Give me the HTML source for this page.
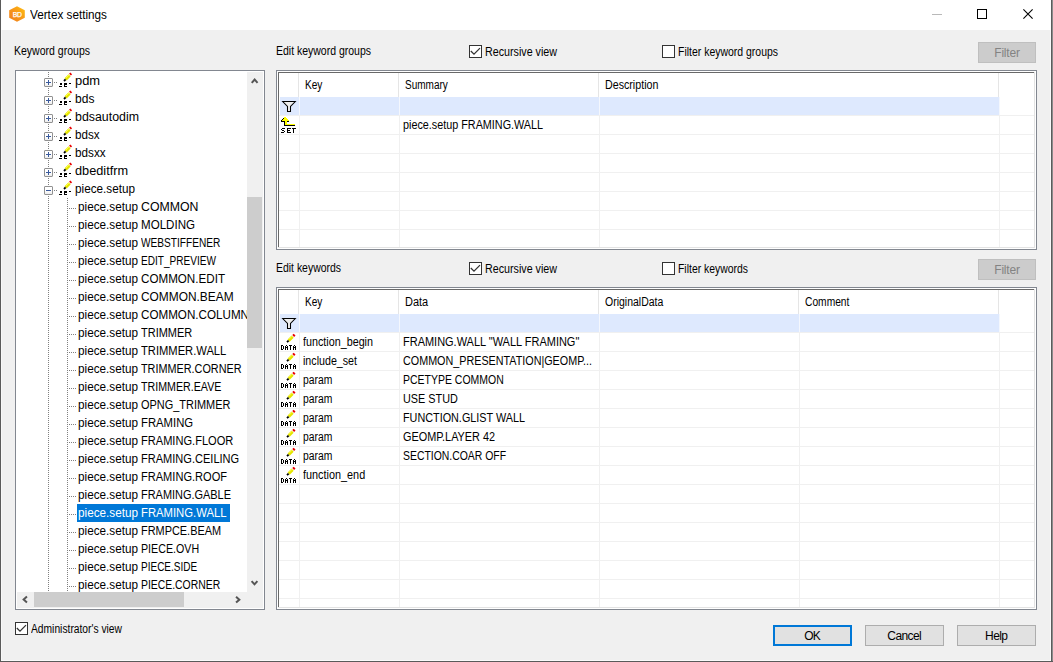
<!DOCTYPE html><html><head><meta charset="utf-8"><style>
*{margin:0;padding:0;box-sizing:border-box}
html,body{width:1053px;height:662px;overflow:hidden;background:#f0f0f0;font-family:"Liberation Sans",sans-serif;color:#000}
.a{position:absolute}
.t{position:absolute;white-space:pre;font-size:12px;line-height:13px}
.g{position:absolute;white-space:pre;font-size:12px;line-height:13px}
.btn{position:absolute;border:1px solid #adadad;background:#e1e1e1;font-size:12px;text-align:center;line-height:20px;letter-spacing:-0.6px;text-indent:-0.6px}
.chk{position:absolute;width:13px;height:13px;border:1px solid #333;background:#fff}
.ti{position:absolute;white-space:pre;font-size:12px;line-height:18px;height:18px}
.r{position:absolute}
</style></head><body>
<div class="r" style="left:0px;top:0px;width:1051px;height:30px;background:#fff;"></div>
<div class="r" style="left:0px;top:0px;width:1px;height:662px;background:#5a5a5a;"></div>
<div class="r" style="left:1051px;top:0px;width:1px;height:662px;background:#5c5c5c;"></div>
<div class="r" style="left:1052px;top:0px;width:1px;height:662px;background:#8c8c8c;"></div>
<div class="r" style="left:0px;top:661px;width:1053px;height:1px;background:#5a5a5a;"></div>
<div class="r" style="left:1050px;top:30px;width:1px;height:631px;background:#fafafa;"></div>
<div class="r" style="left:1px;top:660px;width:1050px;height:1px;background:#fafafa;"></div>
<div class="r" style="left:1px;top:30px;width:1px;height:630px;background:#f8f8f8;"></div>
<svg class="a" style="left:9px;top:6px" width="16" height="16" viewBox="0 0 16 16">
<defs><linearGradient id="og" x1="0" y1="1" x2="1" y2="0"><stop offset="0" stop-color="#f07f1a"/><stop offset="0.5" stop-color="#f7961a"/><stop offset="1" stop-color="#ffc20e"/></linearGradient></defs>
<polygon points="8,0.2 15.8,4.3 15.8,11.7 8,15.8 0.2,11.7 0.2,4.3" fill="url(#og)"/>
<text x="8.3" y="11.3" font-size="6.8" font-family="Liberation Sans" fill="#fff" text-anchor="middle" letter-spacing="-0.2" stroke="#fff" stroke-width="0.25">BD</text>
</svg>
<div class="t" style="left:30px;top:8px;font-size:12px;line-height:14px;transform:scaleX(0.9782);transform-origin:0 0;">Vertex settings</div>
<div class="r" style="left:932px;top:14px;width:10px;height:1px;background:#b9b9b9;"></div>
<div class="r" style="left:977px;top:9px;width:10px;height:10px;border:1px solid #000"></div>
<svg class="a" style="left:1022px;top:8px" width="12" height="12" viewBox="0 0 12 12"><path d="M1.4 1.4L10.6 10.6M10.6 1.4L1.4 10.6" stroke="#000" stroke-width="1.1"/></svg>
<div class="t" style="left:14px;top:45px;;transform:scaleX(0.8764);transform-origin:0 0;">Keyword groups</div>
<div class="r" style="left:15px;top:70px;width:250px;height:540px;border:1px solid #828790;background:#fff"></div>
<div class="r" style="left:16px;top:71px;width:247px;height:537px;overflow:hidden">
<div class="r" style="left:32px;top:1px;width:1px;height:539px;background:repeating-linear-gradient(to bottom,#808080 0 1px,transparent 1px 2px)"></div>
<div class="r" style="left:51px;top:127px;width:1px;height:413px;background:repeating-linear-gradient(to bottom,#808080 0 1px,transparent 1px 2px)"></div>
<div class="r" style="left:28px;top:7px;width:9px;height:9px;background:linear-gradient(#fff,#fff 50%,#ececec);border:1px solid #919191;border-radius:1px;"></div>
<div class="r" style="left:30px;top:11px;width:5px;height:1px;background:#3a5a9c;"></div>
<div class="r" style="left:32px;top:9px;width:1px;height:5px;background:#3a5a9c;"></div>
<div class="r" style="left:38px;top:11px;width:4px;height:1px;background:repeating-linear-gradient(to right,#808080 0 1px,transparent 1px 2px)"></div>
<svg class="r" style="left:42px;top:1px" width="16" height="16" viewBox="0 0 16 16">
<path d="M7.6 7.4L11.6 3.4" stroke="#e4e400" stroke-width="3"/>
<path d="M8 6L11 3" stroke="#ffff40" stroke-width="1"/>
<path d="M6 9L7.6 7.4" stroke="#000" stroke-width="1.8"/>
<path d="M12 2.6L13.2 1.4" stroke="#e80000" stroke-width="2.6"/>
<g fill="#000" shape-rendering="crispEdges">
<rect x="2" y="11" width="2" height="2"/><rect x="1" y="14" width="3" height="1"/>
<rect x="6" y="11" width="3" height="2"/><rect x="6" y="13" width="1" height="1"/><rect x="6" y="14" width="3" height="1"/>
<rect x="11" y="11" width="2" height="1"/>
</g></svg>
<div class="ti" style="left:59px;top:1px;;transform:scaleX(1.0752);transform-origin:0 0;">pdm</div>
<div class="r" style="left:28px;top:25px;width:9px;height:9px;background:linear-gradient(#fff,#fff 50%,#ececec);border:1px solid #919191;border-radius:1px;"></div>
<div class="r" style="left:30px;top:29px;width:5px;height:1px;background:#3a5a9c;"></div>
<div class="r" style="left:32px;top:27px;width:1px;height:5px;background:#3a5a9c;"></div>
<div class="r" style="left:38px;top:29px;width:4px;height:1px;background:repeating-linear-gradient(to right,#808080 0 1px,transparent 1px 2px)"></div>
<svg class="r" style="left:42px;top:19px" width="16" height="16" viewBox="0 0 16 16">
<path d="M7.6 7.4L11.6 3.4" stroke="#e4e400" stroke-width="3"/>
<path d="M8 6L11 3" stroke="#ffff40" stroke-width="1"/>
<path d="M6 9L7.6 7.4" stroke="#000" stroke-width="1.8"/>
<path d="M12 2.6L13.2 1.4" stroke="#e80000" stroke-width="2.6"/>
<g fill="#000" shape-rendering="crispEdges">
<rect x="2" y="11" width="2" height="2"/><rect x="1" y="14" width="3" height="1"/>
<rect x="6" y="11" width="3" height="2"/><rect x="6" y="13" width="1" height="1"/><rect x="6" y="14" width="3" height="1"/>
<rect x="11" y="11" width="2" height="1"/>
</g></svg>
<div class="ti" style="left:59px;top:19px;;transform:scaleX(1.0021);transform-origin:0 0;">bds</div>
<div class="r" style="left:28px;top:43px;width:9px;height:9px;background:linear-gradient(#fff,#fff 50%,#ececec);border:1px solid #919191;border-radius:1px;"></div>
<div class="r" style="left:30px;top:47px;width:5px;height:1px;background:#3a5a9c;"></div>
<div class="r" style="left:32px;top:45px;width:1px;height:5px;background:#3a5a9c;"></div>
<div class="r" style="left:38px;top:47px;width:4px;height:1px;background:repeating-linear-gradient(to right,#808080 0 1px,transparent 1px 2px)"></div>
<svg class="r" style="left:42px;top:37px" width="16" height="16" viewBox="0 0 16 16">
<path d="M7.6 7.4L11.6 3.4" stroke="#e4e400" stroke-width="3"/>
<path d="M8 6L11 3" stroke="#ffff40" stroke-width="1"/>
<path d="M6 9L7.6 7.4" stroke="#000" stroke-width="1.8"/>
<path d="M12 2.6L13.2 1.4" stroke="#e80000" stroke-width="2.6"/>
<g fill="#000" shape-rendering="crispEdges">
<rect x="2" y="11" width="2" height="2"/><rect x="1" y="14" width="3" height="1"/>
<rect x="6" y="11" width="3" height="2"/><rect x="6" y="13" width="1" height="1"/><rect x="6" y="14" width="3" height="1"/>
<rect x="11" y="11" width="2" height="1"/>
</g></svg>
<div class="ti" style="left:59px;top:37px;;transform:scaleX(1.0315);transform-origin:0 0;">bdsautodim</div>
<div class="r" style="left:28px;top:61px;width:9px;height:9px;background:linear-gradient(#fff,#fff 50%,#ececec);border:1px solid #919191;border-radius:1px;"></div>
<div class="r" style="left:30px;top:65px;width:5px;height:1px;background:#3a5a9c;"></div>
<div class="r" style="left:32px;top:63px;width:1px;height:5px;background:#3a5a9c;"></div>
<div class="r" style="left:38px;top:65px;width:4px;height:1px;background:repeating-linear-gradient(to right,#808080 0 1px,transparent 1px 2px)"></div>
<svg class="r" style="left:42px;top:55px" width="16" height="16" viewBox="0 0 16 16">
<path d="M7.6 7.4L11.6 3.4" stroke="#e4e400" stroke-width="3"/>
<path d="M8 6L11 3" stroke="#ffff40" stroke-width="1"/>
<path d="M6 9L7.6 7.4" stroke="#000" stroke-width="1.8"/>
<path d="M12 2.6L13.2 1.4" stroke="#e80000" stroke-width="2.6"/>
<g fill="#000" shape-rendering="crispEdges">
<rect x="2" y="11" width="2" height="2"/><rect x="1" y="14" width="3" height="1"/>
<rect x="6" y="11" width="3" height="2"/><rect x="6" y="13" width="1" height="1"/><rect x="6" y="14" width="3" height="1"/>
<rect x="11" y="11" width="2" height="1"/>
</g></svg>
<div class="ti" style="left:59px;top:55px;;transform:scaleX(0.9701);transform-origin:0 0;">bdsx</div>
<div class="r" style="left:28px;top:79px;width:9px;height:9px;background:linear-gradient(#fff,#fff 50%,#ececec);border:1px solid #919191;border-radius:1px;"></div>
<div class="r" style="left:30px;top:83px;width:5px;height:1px;background:#3a5a9c;"></div>
<div class="r" style="left:32px;top:81px;width:1px;height:5px;background:#3a5a9c;"></div>
<div class="r" style="left:38px;top:83px;width:4px;height:1px;background:repeating-linear-gradient(to right,#808080 0 1px,transparent 1px 2px)"></div>
<svg class="r" style="left:42px;top:73px" width="16" height="16" viewBox="0 0 16 16">
<path d="M7.6 7.4L11.6 3.4" stroke="#e4e400" stroke-width="3"/>
<path d="M8 6L11 3" stroke="#ffff40" stroke-width="1"/>
<path d="M6 9L7.6 7.4" stroke="#000" stroke-width="1.8"/>
<path d="M12 2.6L13.2 1.4" stroke="#e80000" stroke-width="2.6"/>
<g fill="#000" shape-rendering="crispEdges">
<rect x="2" y="11" width="2" height="2"/><rect x="1" y="14" width="3" height="1"/>
<rect x="6" y="11" width="3" height="2"/><rect x="6" y="13" width="1" height="1"/><rect x="6" y="14" width="3" height="1"/>
<rect x="11" y="11" width="2" height="1"/>
</g></svg>
<div class="ti" style="left:59px;top:73px;;transform:scaleX(0.9758);transform-origin:0 0;">bdsxx</div>
<div class="r" style="left:28px;top:97px;width:9px;height:9px;background:linear-gradient(#fff,#fff 50%,#ececec);border:1px solid #919191;border-radius:1px;"></div>
<div class="r" style="left:30px;top:101px;width:5px;height:1px;background:#3a5a9c;"></div>
<div class="r" style="left:32px;top:99px;width:1px;height:5px;background:#3a5a9c;"></div>
<div class="r" style="left:38px;top:101px;width:4px;height:1px;background:repeating-linear-gradient(to right,#808080 0 1px,transparent 1px 2px)"></div>
<svg class="r" style="left:42px;top:91px" width="16" height="16" viewBox="0 0 16 16">
<path d="M7.6 7.4L11.6 3.4" stroke="#e4e400" stroke-width="3"/>
<path d="M8 6L11 3" stroke="#ffff40" stroke-width="1"/>
<path d="M6 9L7.6 7.4" stroke="#000" stroke-width="1.8"/>
<path d="M12 2.6L13.2 1.4" stroke="#e80000" stroke-width="2.6"/>
<g fill="#000" shape-rendering="crispEdges">
<rect x="2" y="11" width="2" height="2"/><rect x="1" y="14" width="3" height="1"/>
<rect x="6" y="11" width="3" height="2"/><rect x="6" y="13" width="1" height="1"/><rect x="6" y="14" width="3" height="1"/>
<rect x="11" y="11" width="2" height="1"/>
</g></svg>
<div class="ti" style="left:59px;top:91px;;transform:scaleX(1.0613);transform-origin:0 0;">dbeditfrm</div>
<div class="r" style="left:28px;top:115px;width:9px;height:9px;background:linear-gradient(#fff,#fff 50%,#ececec);border:1px solid #919191;border-radius:1px;"></div>
<div class="r" style="left:30px;top:119px;width:5px;height:1px;background:#3a5a9c;"></div>
<div class="r" style="left:38px;top:119px;width:4px;height:1px;background:repeating-linear-gradient(to right,#808080 0 1px,transparent 1px 2px)"></div>
<svg class="r" style="left:42px;top:109px" width="16" height="16" viewBox="0 0 16 16">
<path d="M7.6 7.4L11.6 3.4" stroke="#e4e400" stroke-width="3"/>
<path d="M8 6L11 3" stroke="#ffff40" stroke-width="1"/>
<path d="M6 9L7.6 7.4" stroke="#000" stroke-width="1.8"/>
<path d="M12 2.6L13.2 1.4" stroke="#e80000" stroke-width="2.6"/>
<g fill="#000" shape-rendering="crispEdges">
<rect x="2" y="11" width="2" height="2"/><rect x="1" y="14" width="3" height="1"/>
<rect x="6" y="11" width="3" height="2"/><rect x="6" y="13" width="1" height="1"/><rect x="6" y="14" width="3" height="1"/>
<rect x="11" y="11" width="2" height="1"/>
</g></svg>
<div class="ti" style="left:59px;top:109px;;transform:scaleX(0.9773);transform-origin:0 0;">piece.setup</div>
<div class="r" style="left:53px;top:137px;width:8px;height:1px;background:repeating-linear-gradient(to right,#808080 0 1px,transparent 1px 2px)"></div>
<div class="ti" style="left:62px;top:127px;;transform:scaleX(0.9773);transform-origin:0 0;">piece.setup</div>
<div class="ti" style="left:125px;top:127px;;transform:scaleX(1.0250);transform-origin:0 0;">COMMON</div>
<div class="r" style="left:53px;top:155px;width:8px;height:1px;background:repeating-linear-gradient(to right,#808080 0 1px,transparent 1px 2px)"></div>
<div class="ti" style="left:62px;top:145px;;transform:scaleX(0.9773);transform-origin:0 0;">piece.setup</div>
<div class="ti" style="left:125px;top:145px;;transform:scaleX(0.9640);transform-origin:0 0;">MOLDING</div>
<div class="r" style="left:53px;top:173px;width:8px;height:1px;background:repeating-linear-gradient(to right,#808080 0 1px,transparent 1px 2px)"></div>
<div class="ti" style="left:62px;top:163px;;transform:scaleX(0.9773);transform-origin:0 0;">piece.setup</div>
<div class="ti" style="left:125px;top:163px;;transform:scaleX(0.8445);transform-origin:0 0;">WEBSTIFFENER</div>
<div class="r" style="left:53px;top:191px;width:8px;height:1px;background:repeating-linear-gradient(to right,#808080 0 1px,transparent 1px 2px)"></div>
<div class="ti" style="left:62px;top:181px;;transform:scaleX(0.9773);transform-origin:0 0;">piece.setup</div>
<div class="ti" style="left:125px;top:181px;;transform:scaleX(0.8382);transform-origin:0 0;">EDIT_PREVIEW</div>
<div class="r" style="left:53px;top:209px;width:8px;height:1px;background:repeating-linear-gradient(to right,#808080 0 1px,transparent 1px 2px)"></div>
<div class="ti" style="left:62px;top:199px;;transform:scaleX(0.9773);transform-origin:0 0;">piece.setup</div>
<div class="ti" style="left:125px;top:199px;;transform:scaleX(0.9692);transform-origin:0 0;">COMMON.EDIT</div>
<div class="r" style="left:53px;top:227px;width:8px;height:1px;background:repeating-linear-gradient(to right,#808080 0 1px,transparent 1px 2px)"></div>
<div class="ti" style="left:62px;top:217px;;transform:scaleX(0.9773);transform-origin:0 0;">piece.setup</div>
<div class="ti" style="left:125px;top:217px;;transform:scaleX(0.9920);transform-origin:0 0;">COMMON.BEAM</div>
<div class="r" style="left:53px;top:245px;width:8px;height:1px;background:repeating-linear-gradient(to right,#808080 0 1px,transparent 1px 2px)"></div>
<div class="ti" style="left:62px;top:235px;;transform:scaleX(0.9773);transform-origin:0 0;">piece.setup</div>
<div class="ti" style="left:125px;top:235px;;transform:scaleX(0.9701);transform-origin:0 0;">COMMON.COLUMN</div>
<div class="r" style="left:53px;top:263px;width:8px;height:1px;background:repeating-linear-gradient(to right,#808080 0 1px,transparent 1px 2px)"></div>
<div class="ti" style="left:62px;top:253px;;transform:scaleX(0.9773);transform-origin:0 0;">piece.setup</div>
<div class="ti" style="left:125px;top:253px;;transform:scaleX(0.9161);transform-origin:0 0;">TRIMMER</div>
<div class="r" style="left:53px;top:281px;width:8px;height:1px;background:repeating-linear-gradient(to right,#808080 0 1px,transparent 1px 2px)"></div>
<div class="ti" style="left:62px;top:271px;;transform:scaleX(0.9773);transform-origin:0 0;">piece.setup</div>
<div class="ti" style="left:125px;top:271px;;transform:scaleX(0.9316);transform-origin:0 0;">TRIMMER.WALL</div>
<div class="r" style="left:53px;top:299px;width:8px;height:1px;background:repeating-linear-gradient(to right,#808080 0 1px,transparent 1px 2px)"></div>
<div class="ti" style="left:62px;top:289px;;transform:scaleX(0.9773);transform-origin:0 0;">piece.setup</div>
<div class="ti" style="left:125px;top:289px;;transform:scaleX(0.9036);transform-origin:0 0;">TRIMMER.CORNER</div>
<div class="r" style="left:53px;top:317px;width:8px;height:1px;background:repeating-linear-gradient(to right,#808080 0 1px,transparent 1px 2px)"></div>
<div class="ti" style="left:62px;top:307px;;transform:scaleX(0.9773);transform-origin:0 0;">piece.setup</div>
<div class="ti" style="left:125px;top:307px;;transform:scaleX(0.8889);transform-origin:0 0;">TRIMMER.EAVE</div>
<div class="r" style="left:53px;top:335px;width:8px;height:1px;background:repeating-linear-gradient(to right,#808080 0 1px,transparent 1px 2px)"></div>
<div class="ti" style="left:62px;top:325px;;transform:scaleX(0.9773);transform-origin:0 0;">piece.setup</div>
<div class="ti" style="left:125px;top:325px;;transform:scaleX(0.9121);transform-origin:0 0;">OPNG_TRIMMER</div>
<div class="r" style="left:53px;top:353px;width:8px;height:1px;background:repeating-linear-gradient(to right,#808080 0 1px,transparent 1px 2px)"></div>
<div class="ti" style="left:62px;top:343px;;transform:scaleX(0.9773);transform-origin:0 0;">piece.setup</div>
<div class="ti" style="left:125px;top:343px;;transform:scaleX(0.9414);transform-origin:0 0;">FRAMING</div>
<div class="r" style="left:53px;top:371px;width:8px;height:1px;background:repeating-linear-gradient(to right,#808080 0 1px,transparent 1px 2px)"></div>
<div class="ti" style="left:62px;top:361px;;transform:scaleX(0.9773);transform-origin:0 0;">piece.setup</div>
<div class="ti" style="left:125px;top:361px;;transform:scaleX(0.9229);transform-origin:0 0;">FRAMING.FLOOR</div>
<div class="r" style="left:53px;top:389px;width:8px;height:1px;background:repeating-linear-gradient(to right,#808080 0 1px,transparent 1px 2px)"></div>
<div class="ti" style="left:62px;top:379px;;transform:scaleX(0.9773);transform-origin:0 0;">piece.setup</div>
<div class="ti" style="left:125px;top:379px;;transform:scaleX(0.9204);transform-origin:0 0;">FRAMING.CEILING</div>
<div class="r" style="left:53px;top:407px;width:8px;height:1px;background:repeating-linear-gradient(to right,#808080 0 1px,transparent 1px 2px)"></div>
<div class="ti" style="left:62px;top:397px;;transform:scaleX(0.9773);transform-origin:0 0;">piece.setup</div>
<div class="ti" style="left:125px;top:397px;;transform:scaleX(0.9215);transform-origin:0 0;">FRAMING.ROOF</div>
<div class="r" style="left:53px;top:425px;width:8px;height:1px;background:repeating-linear-gradient(to right,#808080 0 1px,transparent 1px 2px)"></div>
<div class="ti" style="left:62px;top:415px;;transform:scaleX(0.9773);transform-origin:0 0;">piece.setup</div>
<div class="ti" style="left:125px;top:415px;;transform:scaleX(0.9120);transform-origin:0 0;">FRAMING.GABLE</div>
<div class="r" style="left:53px;top:443px;width:8px;height:1px;background:repeating-linear-gradient(to right,#808080 0 1px,transparent 1px 2px)"></div>
<div class="r" style="left:61px;top:433px;width:153px;height:18px;background:#0078d7;"></div>
<div class="ti" style="left:62px;top:433px;color:#fff;transform:scaleX(0.9773);transform-origin:0 0;">piece.setup</div>
<div class="ti" style="left:125px;top:433px;color:#fff;transform:scaleX(0.9405);transform-origin:0 0;">FRAMING.WALL</div>
<div class="r" style="left:53px;top:461px;width:8px;height:1px;background:repeating-linear-gradient(to right,#808080 0 1px,transparent 1px 2px)"></div>
<div class="ti" style="left:62px;top:451px;;transform:scaleX(0.9773);transform-origin:0 0;">piece.setup</div>
<div class="ti" style="left:125px;top:451px;;transform:scaleX(0.9101);transform-origin:0 0;">FRMPCE.BEAM</div>
<div class="r" style="left:53px;top:479px;width:8px;height:1px;background:repeating-linear-gradient(to right,#808080 0 1px,transparent 1px 2px)"></div>
<div class="ti" style="left:62px;top:469px;;transform:scaleX(0.9773);transform-origin:0 0;">piece.setup</div>
<div class="ti" style="left:125px;top:469px;;transform:scaleX(0.8889);transform-origin:0 0;">PIECE.OVH</div>
<div class="r" style="left:53px;top:497px;width:8px;height:1px;background:repeating-linear-gradient(to right,#808080 0 1px,transparent 1px 2px)"></div>
<div class="ti" style="left:62px;top:487px;;transform:scaleX(0.9773);transform-origin:0 0;">piece.setup</div>
<div class="ti" style="left:125px;top:487px;;transform:scaleX(0.8343);transform-origin:0 0;">PIECE.SIDE</div>
<div class="r" style="left:53px;top:515px;width:8px;height:1px;background:repeating-linear-gradient(to right,#808080 0 1px,transparent 1px 2px)"></div>
<div class="ti" style="left:62px;top:505px;;transform:scaleX(0.9773);transform-origin:0 0;">piece.setup</div>
<div class="ti" style="left:125px;top:505px;;transform:scaleX(0.8669);transform-origin:0 0;">PIECE.CORNER</div>
<div class="r" style="left:231px;top:1px;width:16px;height:520px;background:#f0f0f0;"></div>
<div class="r" style="left:231px;top:126px;width:15px;height:151px;background:#cdcdcd;"></div>
<div class="r" style="left:1px;top:521px;width:230px;height:16px;background:#f0f0f0;"></div>
<div class="r" style="left:18px;top:521px;width:150px;height:15px;background:#cdcdcd;"></div>
<div class="r" style="left:231px;top:521px;width:16px;height:16px;background:#f0f0f0;"></div>
</div>
<svg class="a" style="left:249px;top:75px" width="13" height="13" viewBox="0 0 13 13"><path d="M2.7500000000000058 7.850000000000006L5.650000000000006 4.550000000000005L8.550000000000006 7.850000000000006" fill="none" stroke="#555" stroke-width="2"/></svg>
<svg class="a" style="left:248px;top:578px" width="14" height="12" viewBox="0 0 14 12"><path d="M3.6 3.0500000000000003L6.5 6.3500000000000005L9.4 3.0500000000000003" fill="none" stroke="#555" stroke-width="2"/></svg>
<svg class="a" style="left:19px;top:593px" width="13" height="14" viewBox="0 0 13 14"><path d="M7.95 3.6L4.6499999999999995 6.5L7.95 9.4" fill="none" stroke="#555" stroke-width="2"/></svg>
<svg class="a" style="left:232px;top:594px" width="13" height="13" viewBox="0 0 13 13"><path d="M4.05 2.7499999999999774L7.3500000000000005 5.649999999999977L4.05 8.549999999999978" fill="none" stroke="#555" stroke-width="2"/></svg>
<div class="t" style="left:276px;top:45px;;transform:scaleX(0.8737);transform-origin:0 0;">Edit keyword groups</div>
<div class="chk" style="left:469px;top:45px"></div>
<svg class="a" style="left:469px;top:45px" width="13" height="13" viewBox="0 0 13 13"><path d="M1.8 6L5 9.2L11 3.1" fill="none" stroke="#333" stroke-width="1.3"/></svg>
<div class="t" style="left:485px;top:46px;;transform:scaleX(0.8922);transform-origin:0 0;">Recursive view</div>
<div class="chk" style="left:662px;top:45px"></div>
<div class="t" style="left:678px;top:46px;;transform:scaleX(0.8717);transform-origin:0 0;">Filter keyword groups</div>
<div class="btn" style="left:978px;top:42px;width:58px;height:21px;background:#cccccc;border-color:#bfbfbf;color:#838383;letter-spacing:-0.2px;text-indent:0">Filter</div>
<div class="r" style="left:276px;top:70px;width:761px;height:180px;border:1px solid #828790;background:#fff"></div>
<div class="r" style="left:278px;top:72px;width:757px;height:1px;background:#696969;"></div>
<div class="r" style="left:278px;top:72px;width:1px;height:175px;background:#696969;"></div>
<div class="r" style="left:278px;top:247px;width:757px;height:1px;background:#e3e3e3;"></div>
<div class="r" style="left:1034px;top:72px;width:1px;height:176px;background:#e3e3e3;"></div>
<div class="r" style="left:298px;top:73px;width:1px;height:24px;background:#e5e5e5;"></div>
<div class="r" style="left:398px;top:73px;width:1px;height:24px;background:#e5e5e5;"></div>
<div class="r" style="left:598px;top:73px;width:1px;height:24px;background:#e5e5e5;"></div>
<div class="r" style="left:998px;top:73px;width:1px;height:24px;background:#e5e5e5;"></div>
<div class="g" style="left:305px;top:79px;;transform:scaleX(0.8411);transform-origin:0 0;">Key</div>
<div class="g" style="left:405px;top:79px;;transform:scaleX(0.8336);transform-origin:0 0;">Summary</div>
<div class="g" style="left:605px;top:79px;;transform:scaleX(0.8895);transform-origin:0 0;">Description</div>
<div class="r" style="left:280px;top:97px;width:719px;height:18px;background:#dee9fe;"></div>
<div class="r" style="left:279px;top:115px;width:755px;height:1px;background:#f0f0f0;"></div>
<div class="r" style="left:279px;top:134px;width:755px;height:1px;background:#f0f0f0;"></div>
<div class="r" style="left:279px;top:153px;width:755px;height:1px;background:#f0f0f0;"></div>
<div class="r" style="left:279px;top:172px;width:755px;height:1px;background:#f0f0f0;"></div>
<div class="r" style="left:279px;top:191px;width:755px;height:1px;background:#f0f0f0;"></div>
<div class="r" style="left:279px;top:210px;width:755px;height:1px;background:#f0f0f0;"></div>
<div class="r" style="left:279px;top:229px;width:755px;height:1px;background:#f0f0f0;"></div>
<div class="r" style="left:299px;top:115px;width:1px;height:132px;background:#f0f0f0;"></div>
<div class="r" style="left:299px;top:97px;width:1px;height:18px;background:#f4f7fd;"></div>
<div class="r" style="left:399px;top:115px;width:1px;height:132px;background:#f0f0f0;"></div>
<div class="r" style="left:399px;top:97px;width:1px;height:18px;background:#f4f7fd;"></div>
<div class="r" style="left:599px;top:115px;width:1px;height:132px;background:#f0f0f0;"></div>
<div class="r" style="left:599px;top:97px;width:1px;height:18px;background:#f4f7fd;"></div>
<div class="r" style="left:999px;top:115px;width:1px;height:132px;background:#f0f0f0;"></div>
<div class="r" style="left:999px;top:97px;width:1px;height:18px;background:#f4f7fd;"></div>
<svg class="a" style="left:279px;top:97px" width="20" height="18" viewBox="0 0 20 18"><path d="M3.7 4.5H16.3L11.5 9.5V14.5H8.5V9.5Z" fill="#eeeeee" stroke="#000" stroke-width="1.05"/></svg>
<svg class="a" style="left:279px;top:114px" width="20" height="20" viewBox="0 17 20 20" shape-rendering="crispEdges"><rect x="5" y="20" width="2" height="1" fill="#ffff00"/><rect x="4" y="21" width="1" height="1" fill="#000"/><rect x="5" y="21" width="3" height="1" fill="#ffff00"/><rect x="3" y="22" width="1" height="1" fill="#000"/><rect x="4" y="22" width="5" height="1" fill="#ffff00"/><rect x="2" y="23" width="1" height="1" fill="#000"/><rect x="3" y="23" width="7" height="1" fill="#ffff00"/><rect x="2" y="24" width="4" height="1" fill="#000"/><rect x="6" y="24" width="2" height="1" fill="#ffff00"/><rect x="8" y="24" width="2" height="1" fill="#000"/><rect x="5" y="25" width="1" height="3" fill="#000"/><rect x="6" y="25" width="2" height="2" fill="#ffff00"/><rect x="6" y="27" width="10" height="1" fill="#ffff00"/><rect x="5" y="28" width="11" height="1" fill="#000"/><rect x="3" y="31" width="3" height="1" fill="#000"/><rect x="2" y="32" width="1" height="1" fill="#000"/><rect x="3" y="33" width="2" height="1" fill="#000"/><rect x="5" y="34" width="1" height="1" fill="#000"/><rect x="2" y="35" width="3" height="1" fill="#000"/><rect x="8" y="31" width="4" height="1" fill="#000"/><rect x="8" y="32" width="1" height="3" fill="#000"/><rect x="9" y="33" width="2" height="1" fill="#000"/><rect x="8" y="35" width="4" height="1" fill="#000"/><rect x="13" y="31" width="4" height="1" fill="#000"/><rect x="14" y="32" width="1" height="4" fill="#000"/></svg>
<div class="g" style="left:403px;top:119px;;transform:scaleX(0.9003);transform-origin:0 0;">piece.setup FRAMING.WALL</div>
<div class="t" style="left:276px;top:262px;;transform:scaleX(0.8701);transform-origin:0 0;">Edit keywords</div>
<div class="chk" style="left:469px;top:262px"></div>
<svg class="a" style="left:469px;top:262px" width="13" height="13" viewBox="0 0 13 13"><path d="M1.8 6L5 9.2L11 3.1" fill="none" stroke="#333" stroke-width="1.3"/></svg>
<div class="t" style="left:485px;top:263px;;transform:scaleX(0.8922);transform-origin:0 0;">Recursive view</div>
<div class="chk" style="left:662px;top:262px"></div>
<div class="t" style="left:678px;top:263px;;transform:scaleX(0.8675);transform-origin:0 0;">Filter keywords</div>
<div class="btn" style="left:978px;top:259px;width:58px;height:21px;background:#cccccc;border-color:#bfbfbf;color:#838383;letter-spacing:-0.2px;text-indent:0">Filter</div>
<div class="r" style="left:276px;top:287px;width:761px;height:323px;border:1px solid #828790;background:#fff"></div>
<div class="r" style="left:278px;top:289px;width:757px;height:1px;background:#696969;"></div>
<div class="r" style="left:278px;top:289px;width:1px;height:318px;background:#696969;"></div>
<div class="r" style="left:278px;top:607px;width:757px;height:1px;background:#e3e3e3;"></div>
<div class="r" style="left:1034px;top:289px;width:1px;height:319px;background:#e3e3e3;"></div>
<div class="r" style="left:298px;top:290px;width:1px;height:24px;background:#e5e5e5;"></div>
<div class="r" style="left:398px;top:290px;width:1px;height:24px;background:#e5e5e5;"></div>
<div class="r" style="left:598px;top:290px;width:1px;height:24px;background:#e5e5e5;"></div>
<div class="r" style="left:798px;top:290px;width:1px;height:24px;background:#e5e5e5;"></div>
<div class="r" style="left:998px;top:290px;width:1px;height:24px;background:#e5e5e5;"></div>
<div class="g" style="left:305px;top:296px;;transform:scaleX(0.8411);transform-origin:0 0;">Key</div>
<div class="g" style="left:405px;top:296px;;transform:scaleX(0.9148);transform-origin:0 0;">Data</div>
<div class="g" style="left:605px;top:296px;;transform:scaleX(0.8740);transform-origin:0 0;">OriginalData</div>
<div class="g" style="left:805px;top:296px;;transform:scaleX(0.8536);transform-origin:0 0;">Comment</div>
<div class="r" style="left:280px;top:314px;width:719px;height:18px;background:#dee9fe;"></div>
<div class="r" style="left:279px;top:332px;width:755px;height:1px;background:#f0f0f0;"></div>
<div class="r" style="left:279px;top:351px;width:755px;height:1px;background:#f0f0f0;"></div>
<div class="r" style="left:279px;top:370px;width:755px;height:1px;background:#f0f0f0;"></div>
<div class="r" style="left:279px;top:389px;width:755px;height:1px;background:#f0f0f0;"></div>
<div class="r" style="left:279px;top:408px;width:755px;height:1px;background:#f0f0f0;"></div>
<div class="r" style="left:279px;top:427px;width:755px;height:1px;background:#f0f0f0;"></div>
<div class="r" style="left:279px;top:446px;width:755px;height:1px;background:#f0f0f0;"></div>
<div class="r" style="left:279px;top:465px;width:755px;height:1px;background:#f0f0f0;"></div>
<div class="r" style="left:279px;top:484px;width:755px;height:1px;background:#f0f0f0;"></div>
<div class="r" style="left:279px;top:503px;width:755px;height:1px;background:#f0f0f0;"></div>
<div class="r" style="left:279px;top:522px;width:755px;height:1px;background:#f0f0f0;"></div>
<div class="r" style="left:279px;top:541px;width:755px;height:1px;background:#f0f0f0;"></div>
<div class="r" style="left:279px;top:560px;width:755px;height:1px;background:#f0f0f0;"></div>
<div class="r" style="left:279px;top:579px;width:755px;height:1px;background:#f0f0f0;"></div>
<div class="r" style="left:279px;top:598px;width:755px;height:1px;background:#f0f0f0;"></div>
<div class="r" style="left:299px;top:332px;width:1px;height:275px;background:#f0f0f0;"></div>
<div class="r" style="left:299px;top:314px;width:1px;height:18px;background:#f4f7fd;"></div>
<div class="r" style="left:399px;top:332px;width:1px;height:275px;background:#f0f0f0;"></div>
<div class="r" style="left:399px;top:314px;width:1px;height:18px;background:#f4f7fd;"></div>
<div class="r" style="left:599px;top:332px;width:1px;height:275px;background:#f0f0f0;"></div>
<div class="r" style="left:599px;top:314px;width:1px;height:18px;background:#f4f7fd;"></div>
<div class="r" style="left:799px;top:332px;width:1px;height:275px;background:#f0f0f0;"></div>
<div class="r" style="left:799px;top:314px;width:1px;height:18px;background:#f4f7fd;"></div>
<div class="r" style="left:999px;top:332px;width:1px;height:275px;background:#f0f0f0;"></div>
<div class="r" style="left:999px;top:314px;width:1px;height:18px;background:#f4f7fd;"></div>
<svg class="a" style="left:279px;top:314px" width="20" height="18" viewBox="0 0 20 18"><path d="M3.7 4.5H16.3L11.5 9.5V14.5H8.5V9.5Z" fill="#eeeeee" stroke="#000" stroke-width="1.05"/></svg>
<svg class="a" style="left:278px;top:331px" width="20" height="20" viewBox="0 -1 20 20"><path d="M10.6 8.6L14.6 4.6" stroke="#e4e400" stroke-width="3"/><path d="M11 7.2L14 4.2" stroke="#ffff40" stroke-width="1"/><path d="M9 10.2L10.6 8.6" stroke="#000" stroke-width="1.8"/><path d="M15.2 4L16.6 2.6" stroke="#e80000" stroke-width="2.6"/><g shape-rendering="crispEdges"><rect x="3" y="13" width="2" height="1" fill="#000"/><rect x="3" y="14" width="1" height="3" fill="#000"/><rect x="5" y="14" width="1" height="3" fill="#000"/><rect x="3" y="17" width="2" height="1" fill="#000"/><rect x="8" y="13" width="1" height="1" fill="#000"/><rect x="7" y="14" width="1" height="4" fill="#000"/><rect x="9" y="14" width="1" height="4" fill="#000"/><rect x="8" y="15" width="1" height="1" fill="#000"/><rect x="11" y="13" width="3" height="1" fill="#000"/><rect x="12" y="14" width="1" height="4" fill="#000"/><rect x="16" y="13" width="1" height="1" fill="#000"/><rect x="15" y="14" width="1" height="4" fill="#000"/><rect x="17" y="14" width="1" height="4" fill="#000"/><rect x="16" y="15" width="1" height="1" fill="#000"/></g></svg>
<div class="g" style="left:303px;top:336px;;transform:scaleX(0.8965);transform-origin:0 0;">function_begin</div>
<div class="g" style="left:403px;top:336px;;transform:scaleX(0.9146);transform-origin:0 0;">FRAMING.WALL &quot;WALL FRAMING&quot;</div>
<svg class="a" style="left:278px;top:350px" width="20" height="20" viewBox="0 -1 20 20"><path d="M10.6 8.6L14.6 4.6" stroke="#e4e400" stroke-width="3"/><path d="M11 7.2L14 4.2" stroke="#ffff40" stroke-width="1"/><path d="M9 10.2L10.6 8.6" stroke="#000" stroke-width="1.8"/><path d="M15.2 4L16.6 2.6" stroke="#e80000" stroke-width="2.6"/><g shape-rendering="crispEdges"><rect x="3" y="13" width="2" height="1" fill="#000"/><rect x="3" y="14" width="1" height="3" fill="#000"/><rect x="5" y="14" width="1" height="3" fill="#000"/><rect x="3" y="17" width="2" height="1" fill="#000"/><rect x="8" y="13" width="1" height="1" fill="#000"/><rect x="7" y="14" width="1" height="4" fill="#000"/><rect x="9" y="14" width="1" height="4" fill="#000"/><rect x="8" y="15" width="1" height="1" fill="#000"/><rect x="11" y="13" width="3" height="1" fill="#000"/><rect x="12" y="14" width="1" height="4" fill="#000"/><rect x="16" y="13" width="1" height="1" fill="#000"/><rect x="15" y="14" width="1" height="4" fill="#000"/><rect x="17" y="14" width="1" height="4" fill="#000"/><rect x="16" y="15" width="1" height="1" fill="#000"/></g></svg>
<div class="g" style="left:303px;top:355px;;transform:scaleX(0.8893);transform-origin:0 0;">include_set</div>
<div class="g" style="left:403px;top:355px;;transform:scaleX(0.8975);transform-origin:0 0;">COMMON_PRESENTATION|GEOMP...</div>
<svg class="a" style="left:278px;top:369px" width="20" height="20" viewBox="0 -1 20 20"><path d="M10.6 8.6L14.6 4.6" stroke="#e4e400" stroke-width="3"/><path d="M11 7.2L14 4.2" stroke="#ffff40" stroke-width="1"/><path d="M9 10.2L10.6 8.6" stroke="#000" stroke-width="1.8"/><path d="M15.2 4L16.6 2.6" stroke="#e80000" stroke-width="2.6"/><g shape-rendering="crispEdges"><rect x="3" y="13" width="2" height="1" fill="#000"/><rect x="3" y="14" width="1" height="3" fill="#000"/><rect x="5" y="14" width="1" height="3" fill="#000"/><rect x="3" y="17" width="2" height="1" fill="#000"/><rect x="8" y="13" width="1" height="1" fill="#000"/><rect x="7" y="14" width="1" height="4" fill="#000"/><rect x="9" y="14" width="1" height="4" fill="#000"/><rect x="8" y="15" width="1" height="1" fill="#000"/><rect x="11" y="13" width="3" height="1" fill="#000"/><rect x="12" y="14" width="1" height="4" fill="#000"/><rect x="16" y="13" width="1" height="1" fill="#000"/><rect x="15" y="14" width="1" height="4" fill="#000"/><rect x="17" y="14" width="1" height="4" fill="#000"/><rect x="16" y="15" width="1" height="1" fill="#000"/></g></svg>
<div class="g" style="left:303px;top:374px;;transform:scaleX(0.8614);transform-origin:0 0;">param</div>
<div class="g" style="left:403px;top:374px;;transform:scaleX(0.8730);transform-origin:0 0;">PCETYPE COMMON</div>
<svg class="a" style="left:278px;top:388px" width="20" height="20" viewBox="0 -1 20 20"><path d="M10.6 8.6L14.6 4.6" stroke="#e4e400" stroke-width="3"/><path d="M11 7.2L14 4.2" stroke="#ffff40" stroke-width="1"/><path d="M9 10.2L10.6 8.6" stroke="#000" stroke-width="1.8"/><path d="M15.2 4L16.6 2.6" stroke="#e80000" stroke-width="2.6"/><g shape-rendering="crispEdges"><rect x="3" y="13" width="2" height="1" fill="#000"/><rect x="3" y="14" width="1" height="3" fill="#000"/><rect x="5" y="14" width="1" height="3" fill="#000"/><rect x="3" y="17" width="2" height="1" fill="#000"/><rect x="8" y="13" width="1" height="1" fill="#000"/><rect x="7" y="14" width="1" height="4" fill="#000"/><rect x="9" y="14" width="1" height="4" fill="#000"/><rect x="8" y="15" width="1" height="1" fill="#000"/><rect x="11" y="13" width="3" height="1" fill="#000"/><rect x="12" y="14" width="1" height="4" fill="#000"/><rect x="16" y="13" width="1" height="1" fill="#000"/><rect x="15" y="14" width="1" height="4" fill="#000"/><rect x="17" y="14" width="1" height="4" fill="#000"/><rect x="16" y="15" width="1" height="1" fill="#000"/></g></svg>
<div class="g" style="left:303px;top:393px;;transform:scaleX(0.8614);transform-origin:0 0;">param</div>
<div class="g" style="left:403px;top:393px;;transform:scaleX(0.9030);transform-origin:0 0;">USE STUD</div>
<svg class="a" style="left:278px;top:407px" width="20" height="20" viewBox="0 -1 20 20"><path d="M10.6 8.6L14.6 4.6" stroke="#e4e400" stroke-width="3"/><path d="M11 7.2L14 4.2" stroke="#ffff40" stroke-width="1"/><path d="M9 10.2L10.6 8.6" stroke="#000" stroke-width="1.8"/><path d="M15.2 4L16.6 2.6" stroke="#e80000" stroke-width="2.6"/><g shape-rendering="crispEdges"><rect x="3" y="13" width="2" height="1" fill="#000"/><rect x="3" y="14" width="1" height="3" fill="#000"/><rect x="5" y="14" width="1" height="3" fill="#000"/><rect x="3" y="17" width="2" height="1" fill="#000"/><rect x="8" y="13" width="1" height="1" fill="#000"/><rect x="7" y="14" width="1" height="4" fill="#000"/><rect x="9" y="14" width="1" height="4" fill="#000"/><rect x="8" y="15" width="1" height="1" fill="#000"/><rect x="11" y="13" width="3" height="1" fill="#000"/><rect x="12" y="14" width="1" height="4" fill="#000"/><rect x="16" y="13" width="1" height="1" fill="#000"/><rect x="15" y="14" width="1" height="4" fill="#000"/><rect x="17" y="14" width="1" height="4" fill="#000"/><rect x="16" y="15" width="1" height="1" fill="#000"/></g></svg>
<div class="g" style="left:303px;top:412px;;transform:scaleX(0.8614);transform-origin:0 0;">param</div>
<div class="g" style="left:403px;top:412px;;transform:scaleX(0.9013);transform-origin:0 0;">FUNCTION.GLIST WALL</div>
<svg class="a" style="left:278px;top:426px" width="20" height="20" viewBox="0 -1 20 20"><path d="M10.6 8.6L14.6 4.6" stroke="#e4e400" stroke-width="3"/><path d="M11 7.2L14 4.2" stroke="#ffff40" stroke-width="1"/><path d="M9 10.2L10.6 8.6" stroke="#000" stroke-width="1.8"/><path d="M15.2 4L16.6 2.6" stroke="#e80000" stroke-width="2.6"/><g shape-rendering="crispEdges"><rect x="3" y="13" width="2" height="1" fill="#000"/><rect x="3" y="14" width="1" height="3" fill="#000"/><rect x="5" y="14" width="1" height="3" fill="#000"/><rect x="3" y="17" width="2" height="1" fill="#000"/><rect x="8" y="13" width="1" height="1" fill="#000"/><rect x="7" y="14" width="1" height="4" fill="#000"/><rect x="9" y="14" width="1" height="4" fill="#000"/><rect x="8" y="15" width="1" height="1" fill="#000"/><rect x="11" y="13" width="3" height="1" fill="#000"/><rect x="12" y="14" width="1" height="4" fill="#000"/><rect x="16" y="13" width="1" height="1" fill="#000"/><rect x="15" y="14" width="1" height="4" fill="#000"/><rect x="17" y="14" width="1" height="4" fill="#000"/><rect x="16" y="15" width="1" height="1" fill="#000"/></g></svg>
<div class="g" style="left:303px;top:431px;;transform:scaleX(0.8614);transform-origin:0 0;">param</div>
<div class="g" style="left:403px;top:431px;;transform:scaleX(0.9064);transform-origin:0 0;">GEOMP.LAYER 42</div>
<svg class="a" style="left:278px;top:445px" width="20" height="20" viewBox="0 -1 20 20"><path d="M10.6 8.6L14.6 4.6" stroke="#e4e400" stroke-width="3"/><path d="M11 7.2L14 4.2" stroke="#ffff40" stroke-width="1"/><path d="M9 10.2L10.6 8.6" stroke="#000" stroke-width="1.8"/><path d="M15.2 4L16.6 2.6" stroke="#e80000" stroke-width="2.6"/><g shape-rendering="crispEdges"><rect x="3" y="13" width="2" height="1" fill="#000"/><rect x="3" y="14" width="1" height="3" fill="#000"/><rect x="5" y="14" width="1" height="3" fill="#000"/><rect x="3" y="17" width="2" height="1" fill="#000"/><rect x="8" y="13" width="1" height="1" fill="#000"/><rect x="7" y="14" width="1" height="4" fill="#000"/><rect x="9" y="14" width="1" height="4" fill="#000"/><rect x="8" y="15" width="1" height="1" fill="#000"/><rect x="11" y="13" width="3" height="1" fill="#000"/><rect x="12" y="14" width="1" height="4" fill="#000"/><rect x="16" y="13" width="1" height="1" fill="#000"/><rect x="15" y="14" width="1" height="4" fill="#000"/><rect x="17" y="14" width="1" height="4" fill="#000"/><rect x="16" y="15" width="1" height="1" fill="#000"/></g></svg>
<div class="g" style="left:303px;top:450px;;transform:scaleX(0.8614);transform-origin:0 0;">param</div>
<div class="g" style="left:403px;top:450px;;transform:scaleX(0.8688);transform-origin:0 0;">SECTION.COAR OFF</div>
<svg class="a" style="left:278px;top:464px" width="20" height="20" viewBox="0 -1 20 20"><path d="M10.6 8.6L14.6 4.6" stroke="#e4e400" stroke-width="3"/><path d="M11 7.2L14 4.2" stroke="#ffff40" stroke-width="1"/><path d="M9 10.2L10.6 8.6" stroke="#000" stroke-width="1.8"/><path d="M15.2 4L16.6 2.6" stroke="#e80000" stroke-width="2.6"/><g shape-rendering="crispEdges"><rect x="3" y="13" width="2" height="1" fill="#000"/><rect x="3" y="14" width="1" height="3" fill="#000"/><rect x="5" y="14" width="1" height="3" fill="#000"/><rect x="3" y="17" width="2" height="1" fill="#000"/><rect x="8" y="13" width="1" height="1" fill="#000"/><rect x="7" y="14" width="1" height="4" fill="#000"/><rect x="9" y="14" width="1" height="4" fill="#000"/><rect x="8" y="15" width="1" height="1" fill="#000"/><rect x="11" y="13" width="3" height="1" fill="#000"/><rect x="12" y="14" width="1" height="4" fill="#000"/><rect x="16" y="13" width="1" height="1" fill="#000"/><rect x="15" y="14" width="1" height="4" fill="#000"/><rect x="17" y="14" width="1" height="4" fill="#000"/><rect x="16" y="15" width="1" height="1" fill="#000"/></g></svg>
<div class="g" style="left:303px;top:469px;;transform:scaleX(0.9049);transform-origin:0 0;">function_end</div>
<div class="chk" style="left:15px;top:622px"></div>
<svg class="a" style="left:15px;top:622px" width="13" height="13" viewBox="0 0 13 13"><path d="M1.8 6L5 9.2L11 3.1" fill="none" stroke="#333" stroke-width="1.3"/></svg>
<div class="t" style="left:31px;top:623px;;transform:scaleX(0.8558);transform-origin:0 0;">Administrator&#x27;s view</div>
<div class="btn" style="left:773px;top:625px;width:79px;height:21px;border:2px solid #0078d7;line-height:18px">OK</div>
<div class="btn" style="left:865px;top:625px;width:79px;height:21px">Cancel</div>
<div class="btn" style="left:957px;top:625px;width:79px;height:21px">Help</div>
</body></html>
